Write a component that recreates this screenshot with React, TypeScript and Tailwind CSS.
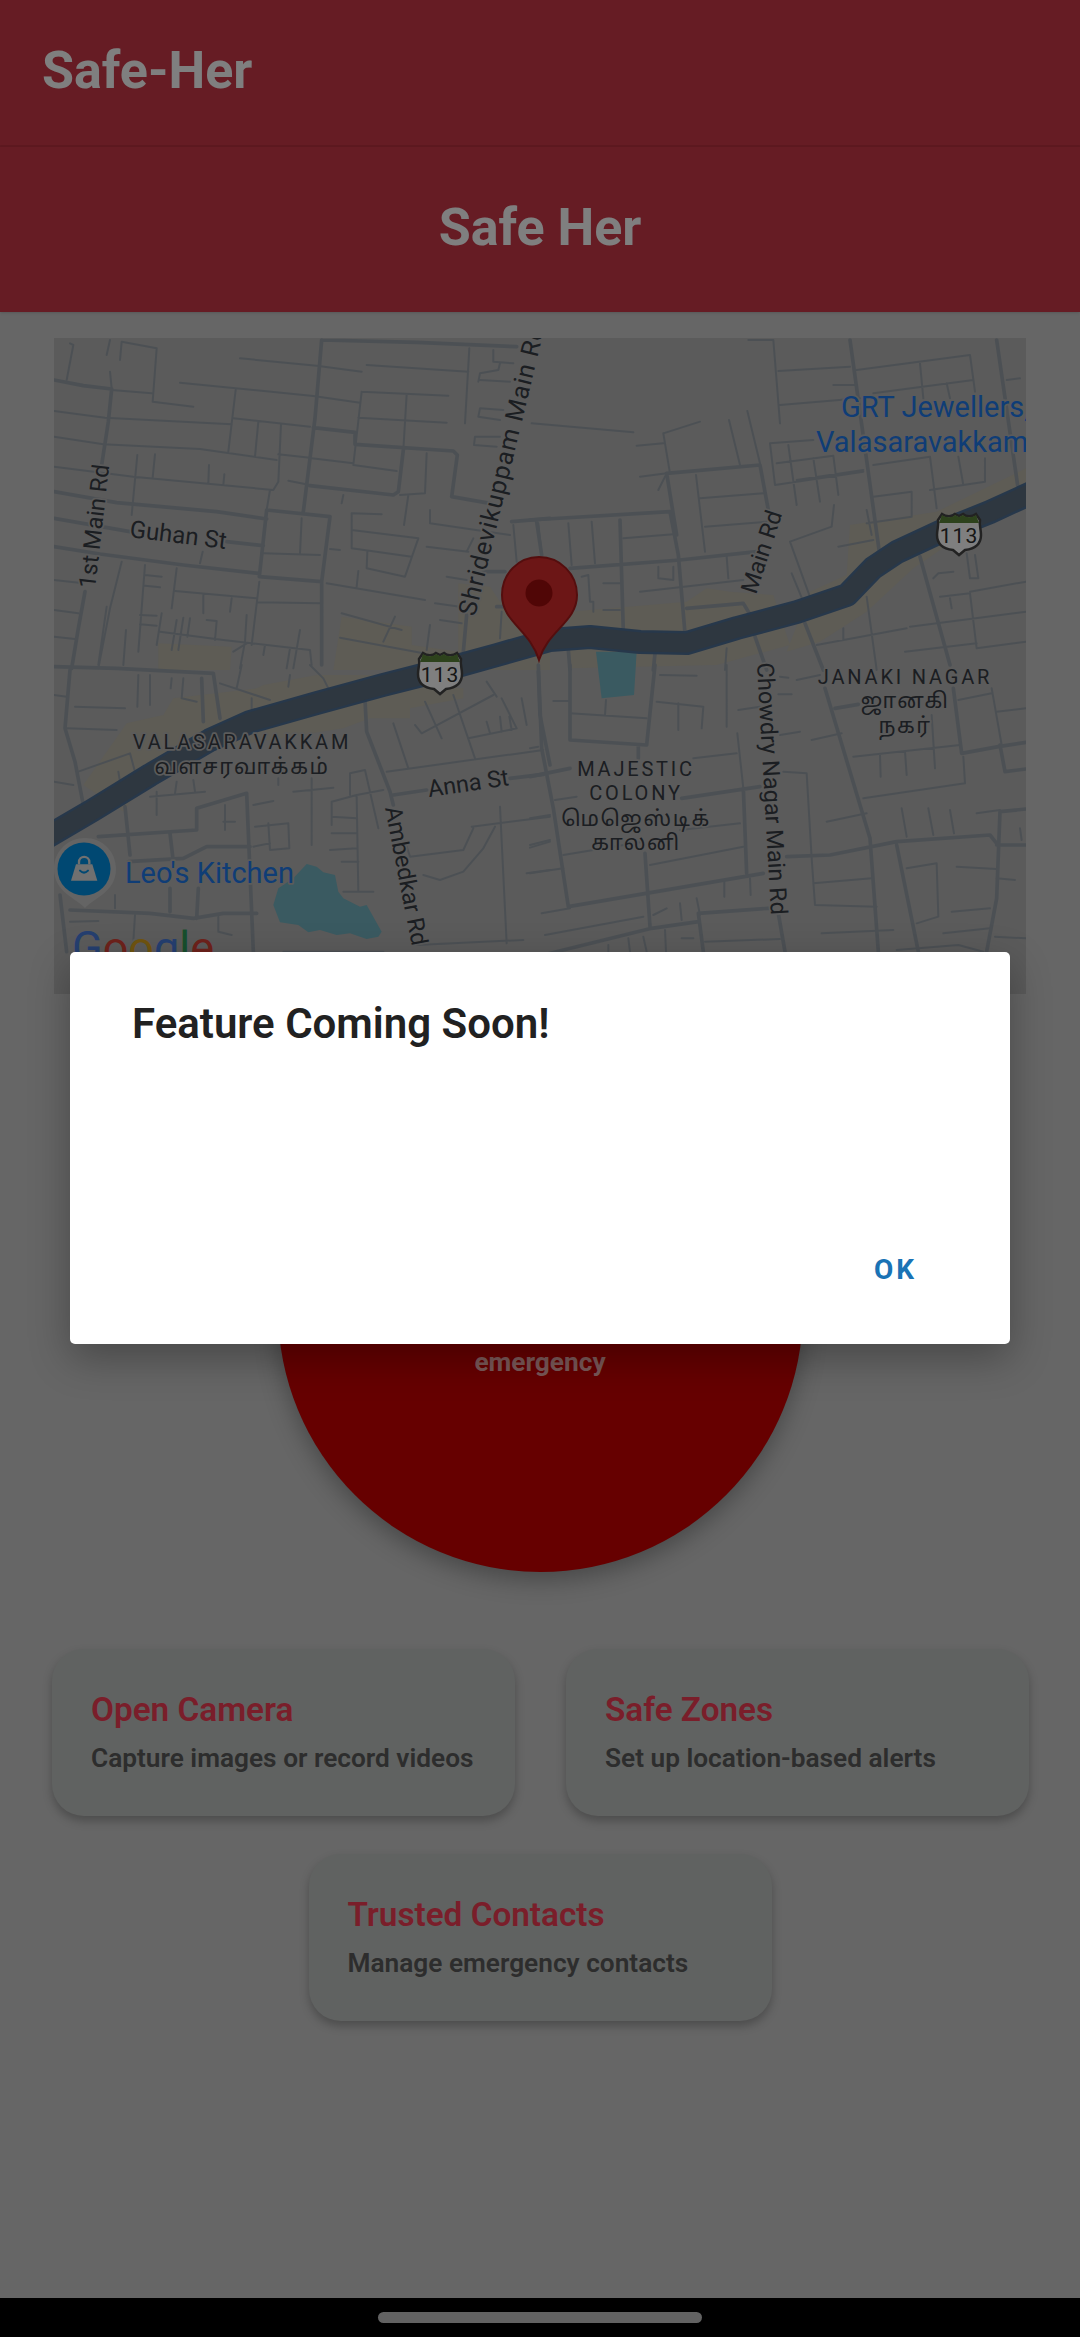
import React from "react";

type Layer = { x: number; y: number; medium: string; minor: string };

const layers: Layer[] = [
  {
    x: 50,
    y: 335,
    medium:
      "M12 135L100 152L185 162 M185 162L175 260L155 390 M105 770L85 880L65 1000 M12 470L200 503L500 530L650 552 M12 550L240 590 M530 620L640 632 M12 635L150 657L400 690L625 715 M650 525L840 545L815 740L815 990 M650 525L628 725L815 740 M815 15L795 250L760 530 M815 15L1100 22L1400 35 M790 278L915 292L915 328L1210 348L1222 360L1205 485L1320 505 M1060 345L1045 470L1030 480L780 452 M1385 560L1500 550 M1250 840L1240 950 M1300 710L1365 710 M1340 815L1360 815",
    minor:
      "M60 25L70 30L50 135 M180 15L170 60 M215 20L320 40L308 200L430 215 M215 20L210 75 M180 110L185 160 M185 165L305 175 M12 228L165 248L545 268 M12 305L160 328L450 342L680 375 M570 70L800 92L935 110 M390 143L790 183L930 203 M557 165L535 350 M550 250L780 275 M625 260L615 365 M693 268L685 440L670 465L250 425L12 395 M685 358L780 368 M785 370L910 385 M262 360L245 540 M315 358L308 428 M477 390L475 445 M523 418L520 450 M660 465L650 525 M715 437L780 450 M755 550L750 655 M640 655L810 660 M935 170L1195 182 M935 170L910 390L1040 408 M1070 178L1060 345 M925 248L1190 263 M1130 355L1125 475L1050 480 M880 480L875 505 M1075 480L1062 570 M950 90L1255 110 M1258 40L1245 265 M1330 45L1330 80L1390 85 M1285 140L1290 115L1345 105L1350 85 M1380 140L1290 135 M1360 225L1290 220L1285 245L1350 255 M1350 305L1275 305L1272 330L1340 335 M905 535L995 538 M905 535L905 640L1085 665 M905 585L1105 610L1065 725L950 700L952 650 M1140 525L1140 565L1380 600 M1390 570L1400 680 M1465 565L1475 660 M1130 635L1255 650 M840 642L870 645 M830 745L1125 795 M925 708L920 755 M1190 725L1250 735 M1155 805L1230 815 M1270 610L1250 650 M215 680L180 820L145 1000 M285 690L265 950 M380 700L365 820 M375 768L620 790 M460 780L460 835 M545 790L540 830 M628 740L605 930 M622 802L810 805 M458 650L450 685 M285 720L335 725 M285 752L330 757 M270 840L320 842 M270 868L320 872 M335 835L320 930 M380 855L365 945 M400 848L385 945 M420 850L412 905 M470 855L500 858L495 915 M12 825L85 835 M12 905L75 912 M12 735L100 745 M170 815L145 990 M228 885L220 990 M330 890L520 915L780 945L785 990 M590 840L585 920L570 1000 M590 925L550 950 M645 930L640 960 M750 885L730 1000 M720 940L710 1000 M875 835L1055 885 M1035 845L1000 920 M870 908L1120 955 M1140 870L1130 945 M1170 855L1235 865 M1355 830L1350 910",
  },
  {
    x: 530,
    y: 335,
    medium:
      "M0 555L420 530L445 660L465 895 M410 415L690 390L715 525 M410 415L440 600 M120 700L450 675L680 650 M470 820L640 805L670 855 M960 15L1050 665 M1170 665L1260 990 M20 560L35 660 M270 555L280 890 M115 945L120 1005 M375 955L370 1005 M675 905L710 1005 M825 865L880 1005 M1400 15L1465 465",
    minor:
      "M655 15L730 15L750 265 M745 108L960 95 M750 210L990 190 M910 150L980 150 M1030 175L1330 135 M980 105L1320 60L1335 170 M1170 85L1180 190 M1250 145L1260 190 M1430 135L1470 130 M5 265L310 292 M400 295L510 260 M320 332L400 325 M400 295L420 415 M330 425L410 415 M385 465L410 415 M597 255L630 390 M652 228L690 385 M498 420L525 650 M510 490L700 475 M525 575L710 560 M280 610L430 598 M115 565L125 690 M185 560L195 685 M720 325L850 315 M720 325L735 450L1000 410 M775 330L800 510 M740 385L910 362L925 480 M850 370L870 500 M800 435L1000 405 M1030 485L1145 470L1145 545L1010 565 M1010 525L1025 600 M1030 390L1200 365L1220 520 M1285 365L1300 450L1365 440L1365 370 M1200 465L1300 450 M912 510L905 575L780 620L845 800 M785 715L820 800 M925 635L1030 615 M1310 655L1320 730L1345 730L1335 660 M1210 730L1225 715L1270 710 M1230 785L1320 775L1340 940L1488 920 M1320 770L1488 740 M1260 790L1265 820 M1140 875L1488 830 M1125 950L1340 925 M330 770L640 735 M220 745L270 745 M220 825L270 825 M590 665L595 730 M385 695L385 730L430 735L430 695 M155 725L175 720L180 800L190 800L190 830 M860 930L1130 880 M940 880L940 915 M1010 785L1040 1005 M590 940L585 1005",
  },
  {
    x: 50,
    y: 665,
    medium:
      "M12 5L200 10L490 25L510 160 M60 15L45 190L75 290L100 420 M455 40L460 170 M945 105L950 200L1020 380L1030 420 M1030 390L1130 375 M1380 340L1480 328 M145 515L440 495L440 430L590 385 M590 385L610 860 M225 425L235 520L240 570 M360 505L370 590 M235 590L400 580L470 545L600 545 M60 735L300 745L430 760L520 745L620 745 M360 670L360 740 M445 670L440 760 M30 690L50 860 M1465 20L1470 150L1500 300",
    minor:
      "M75 125L225 130 M50 190L200 195 M12 90L50 95 M510 55L660 105 M265 30L262 125 M300 30L300 120 M365 40L362 70 M400 40L395 100L440 110 M575 0L560 70 M605 100L605 135 M720 30L715 65 M780 0L820 40L835 70 M85 320L240 265L255 320 M12 350L70 360 M205 320L210 350 M320 380L320 450 M380 350L375 385 M430 345L435 380 M300 395L465 380 M525 420L525 495 M520 470L555 470 M610 420L670 408 M615 485L715 475L718 550L660 555L655 475 M610 545L660 535 M730 380L850 368 M785 340L785 540 M685 340L685 360 M845 480L845 410L920 390L1000 375 M845 455L920 460 M845 505L920 505 M900 390L900 325L945 315L985 490 M920 395L925 680 M840 555L920 550 M875 590L925 590 M880 680L970 680 M1010 320L1480 255 M1030 175L1075 310 M1125 110L1175 220 M1095 180L1115 205L1330 90 M1210 90L1275 280 M1255 220L1400 190L1355 100 M1310 170L1320 205 M1350 155L1355 200 M1378 155L1385 195 M1415 100L1430 180 M1310 50L1340 95 M1350 425L1370 835 M1265 485L1500 455 M1270 490L1240 555L1080 575L1065 530 M1335 485L1300 550L1240 620L1170 645L1120 630 M1430 625L1500 615 M1440 548L1500 530 M1100 840L1420 825 M60 770L145 768 M195 690L195 730 M255 750L250 830 M505 755L505 800L545 810 M700 860L1000 860",
  },
  {
    x: 530,
    y: 665,
    medium:
      "M25 0L35 250L70 430L115 725L700 625 M120 0L120 225L350 240L375 0 M120 310L0 335 M325 240L325 280 M345 565L360 785 M455 400L690 365 M640 370L650 625 M505 745L715 730 M505 745L520 860 M0 880L365 790L505 770 M745 745L765 860 M770 575L900 570L1100 530L1380 510L1400 535 M885 70L1020 520L1045 860 M1100 540L1165 860 M1410 440L1400 700L1370 860 M1410 440L1488 432 M1400 540L1488 540 M915 130L985 118 M1270 70L1295 265L1405 245L1488 232 M1410 240L1425 320L1488 312",
    minor:
      "M70 108L120 108 M120 145L350 160 M228 105L225 150 M380 110L520 125L515 190 M445 115L445 195 M390 30L500 32 M590 0L590 185 M0 250L25 245 M490 280L620 265 M622 205L640 370 M760 320L830 325L845 580L855 720L1040 725 M850 655L1025 640 M625 135L690 125 M750 35L775 38 M745 88L785 88 M750 210L810 200 M845 225L935 205 M800 45L870 30 M75 405L140 395 M0 460L60 450 M0 540L60 525 M100 570L340 530 M360 600L640 545 M450 495L630 475 M0 625L100 610 M583 650L583 695 M660 640L662 690 M35 745L120 730 M370 750L410 730 M450 715L455 765 M500 700L510 750 M45 810L340 755 M340 815L350 860 M405 795L408 860 M455 820L490 820 M525 830L750 822 M295 820L300 860 M235 840L235 860 M970 275L1290 240 M1050 270L1052 335 M1125 260L1130 330 M1205 150L1215 310 M1300 275L1305 355L1000 400 M890 470L1010 445 M1285 105L1385 85 M1385 70L1415 240 M1400 140L1488 130 M1115 430L1130 515 M1195 430L1210 510 M1260 435L1272 505 M1130 610L1220 595L1225 755L1160 775 M1280 605L1400 612 M1400 640L1455 645 M1265 740L1380 730 M875 805L1090 795 M1240 805L1380 790 M1395 815L1488 820 M1340 445L1410 435 M1470 490L1475 525 M1100 855L1285 840L1360 860",
  },
];

const LAND = "#b6b6b6";
const ROAD = "#98a1a9";
const BEIGE = "#bcb8aa";
const WATER = "#74b4c2";
const INK = "#363c44";
const BLUE = "#1e7aec";

const highway =
  "M40 841L93 810L150 775L210 740L250 722L317 703L383 685L450 668L497 655L550 640L590 637L640 642L687 643L737 628L797 612L847 595L873 568L897 552L940 532L990 512L1040 489";

function Label(props: {
  x: number;
  y: number;
  angle?: number;
  size?: number;
  spacing?: number;
  anchor?: "start" | "middle" | "end";
  fill?: string;
  children: React.ReactNode;
}) {
  const { x, y, angle = 0, size = 23.5, spacing = 0, anchor = "start", fill = INK, children } = props;
  return (
    <text
      transform={`translate(${x} ${y}) rotate(${angle})`}
      fontSize={size}
      letterSpacing={spacing}
      textAnchor={anchor}
      fill={fill}
      stroke={LAND}
      strokeWidth={3.5}
      strokeLinejoin="round"
      className="[paint-order:stroke]"
    >
      {children}
    </text>
  );
}

function Shield({ x, y }: { x: number; y: number }) {
  return (
    <g transform={`translate(${x} ${y})`}>
      <path
        d="M3 7L7 1C11 4 17 4 20 1L24 3L28 1C31 4 37 4 41 1L45 7C44 12 46 16 46 22C46 32 38 36 30 37L24 42L18 37C10 36 2 32 2 22C2 16 4 12 3 7Z"
        fill="#ffffff"
        stroke="#444444"
        strokeWidth={2.5}
      />
      <path d="M4 10L7 2C11 5 17 5 20 2L24 4L28 2C31 5 37 5 41 2L44 10Z" fill="#5a8438" />
      <text x={24} y={30} fontSize={21} letterSpacing={1} textAnchor="middle" fill="#2c2c2c">
        113
      </text>
    </g>
  );
}

function MapView() {
  return (
    <svg viewBox="54 338 972 656" className="block h-full w-full">
      <rect x={54} y={338} width={972} height={656} fill={LAND} />

      <g transform="translate(530 335) scale(0.33333)" fill={BEIGE}>
        <path d="M120 830L470 800L530 760L600 770L730 780L780 930L560 990L120 1000Z" />
        <path d="M840 770L950 720L960 570L1220 530L1488 400L1488 470L1150 700L1010 830L870 920L770 950Z" />
      </g>
      <g transform="translate(50 335) scale(0.33333)" fill={BEIGE}>
        <path d="M325 925L545 935L540 1005L325 1005Z" />
        <path d="M875 845L1085 875L1085 930L1225 950L1225 745L1320 755L1350 800L1500 870L1500 1005L850 1005Z" />
      </g>
      <g transform="translate(50 665) scale(0.33333)" fill={BEIGE}>
        <path d="M230 175L340 150L370 100L620 70L640 60L800 30L1000 30L1100 60L1240 70L1240 100L1080 130L1080 160L960 160L880 190L500 250L300 330L220 440L100 360Z" />
      </g>

      <g transform="translate(50 665) scale(0.33333)" fill={WATER}>
        <path d="M770 597L800 605L820 622L855 630L865 680L880 700L930 725L950 720L995 800L985 815L950 822L900 805L860 810L810 795L775 802L745 780L690 772L670 720L685 670L730 640Z" />
      </g>
      <g transform="translate(530 665) scale(0.33333)" fill={WATER}>
        <path d="M198 -40L320 -40L312 90L215 100Z" />
      </g>

      {layers.map((l) => (
        <g
          key={`${l.x}-${l.y}`}
          transform={`translate(${l.x} ${l.y}) scale(0.33333)`}
          fill="none"
          stroke={ROAD}
          strokeLinejoin="round"
          strokeLinecap="round"
        >
          <path d={l.minor} strokeWidth={6} />
          <path d={l.medium} strokeWidth={11} />
        </g>
      ))}

      <path d={highway} fill="none" stroke="#4f7096" strokeWidth={24} strokeLinejoin="round" />
      <path d={highway} fill="none" stroke="#5c6e80" strokeWidth={19} strokeLinejoin="round" />

      <Shield x={416} y={652} />
      <Shield x={935} y={513} />

      <Label x={95} y={589} angle={-83.4}>1st Main Rd</Label>
      <Label x={129} y={537} angle={7} size={24}>Guhan St</Label>
      <Label x={475} y={617} angle={-76.5} size={25} spacing={1}>Shridevikuppam Main Rd</Label>
      <Label x={385} y={808} angle={79}>Ambedkar Rd</Label>
      <Label x={429} y={797} angle={-8.3}>Anna St</Label>
      <Label x={756} y={595} angle={-72}>Main Rd</Label>
      <Label x={757} y={663} angle={86.8}>Chowdry Nagar Main Rd</Label>

      <Label x={242} y={749} size={20} spacing={2.8} anchor="middle">VALASARAVAKKAM</Label>
      <Label x={242} y={774} size={21.5} spacing={1.6} anchor="middle">வளசரவாக்கம்</Label>
      <Label x={636} y={776} size={20} spacing={2.8} anchor="middle">MAJESTIC</Label>
      <Label x={636} y={800} size={20} spacing={2.8} anchor="middle">COLONY</Label>
      <Label x={636} y={826} size={21.5} spacing={1.6} anchor="middle">மெஜெஸ்டிக்</Label>
      <Label x={636} y={850} size={21.5} spacing={1.6} anchor="middle">காலனி</Label>
      <Label x={905} y={684} size={20} spacing={2.8} anchor="middle">JANAKI NAGAR</Label>
      <Label x={905} y={708} size={21.5} spacing={1.6} anchor="middle">ஜானகி</Label>
      <Label x={905} y={733} size={21.5} spacing={1.6} anchor="middle">நகர்</Label>

      <Label x={841} y={417} size={29} fill={BLUE}>GRT Jewellers,</Label>
      <Label x={816} y={452} size={29} fill={BLUE}>Valasaravakkam</Label>
      <Label x={125} y={883} size={29} fill={BLUE}>Leo's Kitchen</Label>

      <path
        d="M85 908C76 898 54 892 54 869C54 851 68 838 85 838C102 838 116 851 116 869C116 892 94 898 85 908Z"
        fill="#c8c8c8"
      />
      <circle cx={84} cy={869} r={26.5} fill="#0090e4" />
      <g transform="translate(40 830) scale(0.33333)">
        <path d="M108 103L157 103L172 152L93 152Z" fill="#e0e0e0" />
        <path d="M117 103V96A15 15 0 0 1 148 96V103" fill="none" stroke="#e0e0e0" strokeWidth={7} />
        <path d="M120 122Q132 134 144 122" fill="none" stroke="#0090e4" strokeWidth={6} strokeLinecap="round" />
      </g>

      <text x={72} y={963} fontSize={45} stroke={LAND} strokeWidth={4} className="[paint-order:stroke]">
        <tspan fill="#4a7fe0">G</tspan>
        <tspan fill="#dc4436">o</tspan>
        <tspan fill="#e0a820">o</tspan>
        <tspan fill="#4a7fe0">g</tspan>
        <tspan fill="#2f9e58">l</tspan>
        <tspan fill="#dc4436">e</tspan>
      </text>

      <path
        d="M539 557C518 557 502 574 502 595C502 622 530 630 539 660C548 630 577 622 577 595C577 574 560 557 539 557Z"
        fill="#d92c2c"
        stroke="#a81c1c"
        strokeWidth={2}
      />
      <circle cx={539} cy={593} r={13.5} fill="#a00c0c" />
    </svg>
  );
}

function Card({ title, text }: { title: string; text: string }) {
  return (
    <div className="flex h-[167px] w-[463px] flex-col rounded-[32px] bg-[#c0c4c2] pl-[39px] pt-[41px] shadow-[0_5px_10px_rgba(0,0,0,0.25)]">
      <div className="text-[33.3px] font-semibold leading-[40px] text-[#f43c54]">{title}</div>
      <div className="mt-[11px] text-[26.25px] font-semibold leading-[34px] text-[#5a5a5a]">{text}</div>
    </div>
  );
}

export default function App() {
  return (
    <div className="relative flex h-[2337px] w-[1080px] flex-col overflow-hidden bg-[#cccccc] font-['Roboto','Noto_Sans','Noto_Sans_Tamil',sans-serif]">
      <header className="flex h-[147px] items-center border-b-2 border-[#bc3240] bg-[#cc3848] pb-[3px] pl-[42px]">
        <h1 className="text-[52px] font-bold leading-none text-white">Safe-Her</h1>
      </header>
      <div className="flex h-[165px] items-center justify-center bg-[#cc3848] pb-[3px] shadow-sm">
        <h2 className="text-[52px] font-bold leading-none text-white">Safe Her</h2>
      </div>

      <div className="ml-[54px] mt-[26px] h-[656px] w-[972px] overflow-hidden">
        <MapView />
      </div>

      <div className="mx-auto mt-[53px] flex h-[525px] w-[525px] shrink-0 flex-col items-center rounded-full bg-[#cc0000] pt-[298px] shadow-[0_8px_24px_rgba(0,0,0,0.3)]">
        <span className="text-[26.25px] font-bold leading-[34px] text-[#f4b0b0]">emergency</span>
      </div>

      <div className="mt-[77px] flex justify-between pl-[52px] pr-[51px]">
        <Card title="Open Camera" text="Capture images or record videos" />
        <Card title="Safe Zones" text="Set up location-based alerts" />
      </div>
      <div className="mt-[38px] flex justify-center">
        <Card title="Trusted Contacts" text="Manage emergency contacts" />
      </div>

      <div className="flex-1" />
      <div className="flex h-[39px] justify-center bg-black pt-[14px]">
        <div className="h-[11px] w-[324px] rounded-full bg-[#c4c4c4]" />
      </div>

      <div className="absolute inset-0 bg-black/50" />
      <div className="absolute inset-x-0 top-0 flex h-[2296px] items-center justify-center">
        <div className="relative flex h-[392px] w-[940px] flex-col rounded-[5px] bg-white pl-[62px] pr-[93px] pt-[47px] shadow-[0_14px_40px_rgba(0,0,0,0.3)]">
          <div className="text-[42px] font-semibold leading-[50px] text-[#212121]">Feature Coming Soon!</div>
          <div className="flex-1" />
          <div className="mb-[57px] self-end text-[28px] font-bold leading-[34px] tracking-[3px] text-[#1a73b5]">OK</div>
        </div>
      </div>
    </div>
  );
}
